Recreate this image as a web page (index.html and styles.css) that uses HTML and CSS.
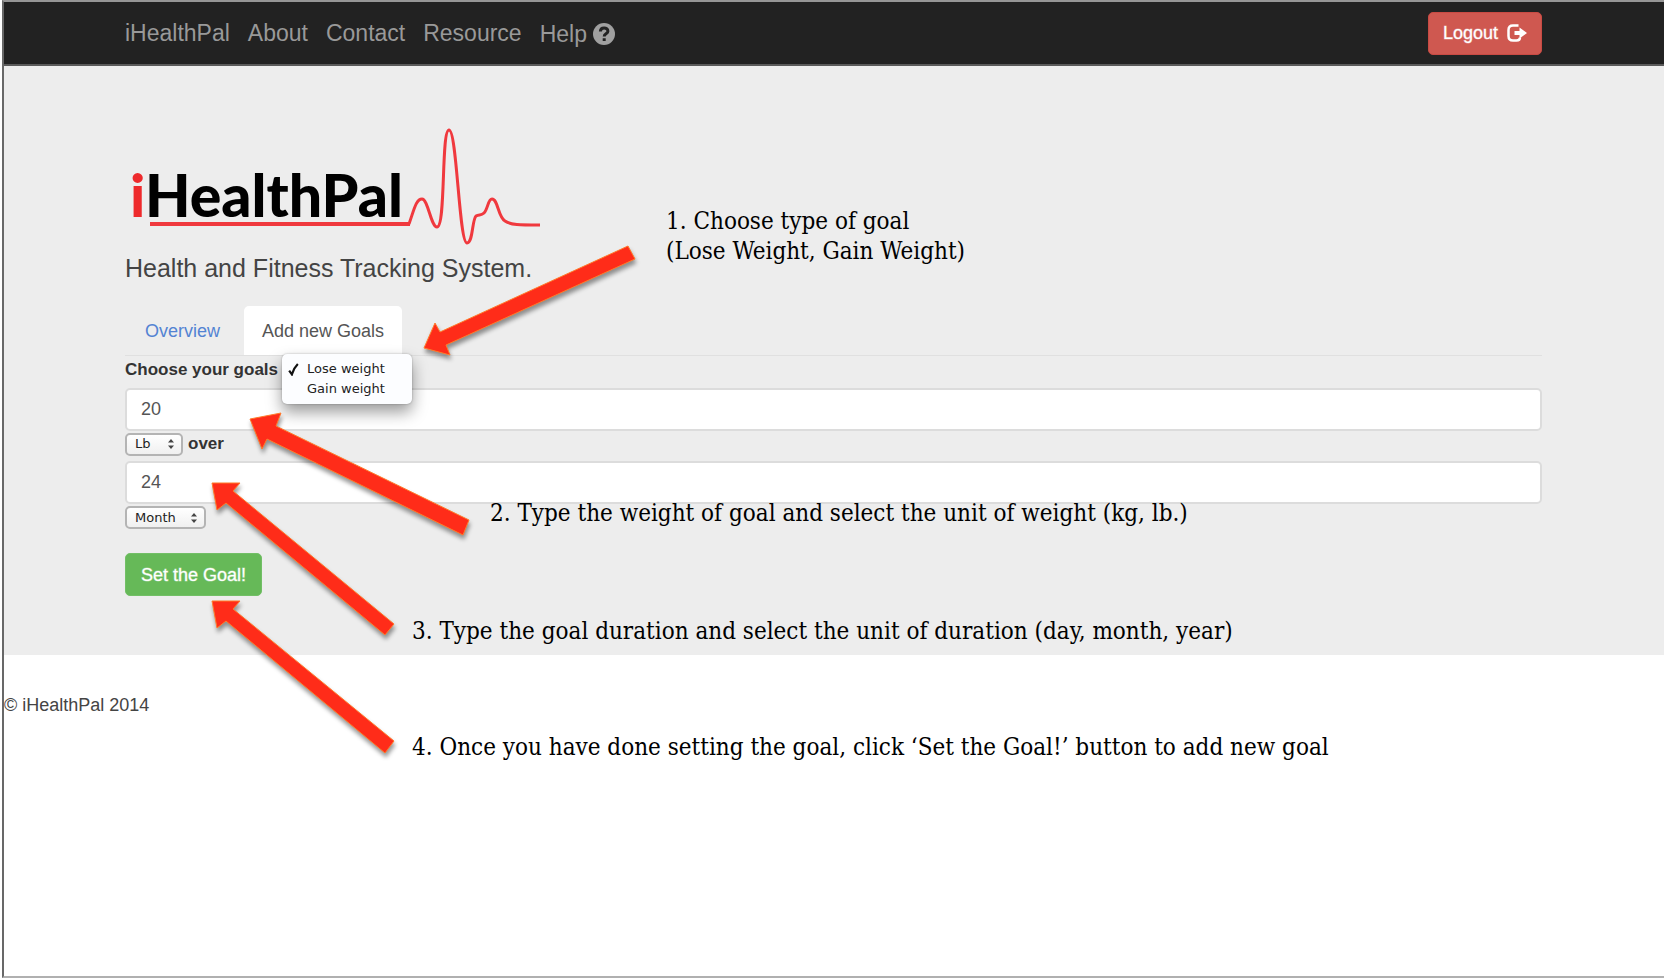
FILE: index.html
```html
<!DOCTYPE html>
<html lang="en">
<head>
<meta charset="utf-8">
<title>iHealthPal - Add new Goals</title>
<link rel="stylesheet" href="styles.css">
</head>
<body>
<div class="page">
  <nav class="navbar">
    <div class="container navbar-row">
      <a class="nav-link" href="#">iHealthPal</a>
      <a class="nav-link" href="#">About</a>
      <a class="nav-link" href="#">Contact</a>
      <a class="nav-link" href="#">Resource</a>
      <a class="nav-link nav-help" href="#">Help
        <svg class="help-icon" viewBox="0 0 22 22" aria-hidden="true"><circle cx="11" cy="11" r="11" fill="#a0a0a0"/><path d="M7.400 8.600C7.400 3.700 14.900 3.900 14.900 8.200C14.900 10.800 11.200 10.800 11.200 13.400M11.200 15.300V18" fill="none" stroke="#222" stroke-width="3"/></svg>
      </a>
      <button class="btn btn-danger" type="button">Logout
        <svg class="logout-icon" viewBox="0 0 20 18" aria-hidden="true"><path d="M11.500 1.500H6Q1.500 1.500 1.500 6V12Q1.500 16.500 6 16.500H9.500Q13 16.500 13 13.500" fill="none" stroke="#fff" stroke-width="2.500"/><path d="M7.500 7H12.500V3.500L20 9L12.500 14.500V11H7.500Z" fill="#fff"/></svg>
      </button>
    </div>
  </nav>

  <main class="hero">
    <div class="container">
      <svg class="logo" viewBox="125 125 420 128" role="img" aria-label="iHealthPal">
        <text class="logo-text" x="130" y="217"><tspan class="logo-i">i</tspan>HealthPal</text>
        <path d="M150 224H410" fill="none" stroke="#f0393e" stroke-width="4"/>
        <path d="M409 224C414 210 416 199 422 199C428 199 431 227 437 227C446 227 441 130 449 130C457 130 459 243 467 243C473 243 472 220 476 216C479 214 481 216 484 213C488 209 488 199 492 199C498 199 498 217 505 221C511 225 519 225 540 225" fill="none" stroke="#f0393e" stroke-width="3"/>
      </svg>
      <p class="tagline">Health and Fitness Tracking System.</p>

      <div class="tabs">
        <a class="tab" href="#">Overview</a>
        <a class="tab tab-active" href="#">Add new Goals</a>
      </div>

      <form class="goal-form">
        <div class="form-row type-row">
          <label class="label" for="goal-type">Choose your goals</label>
          <div class="type-picker">
            <select class="type-select" id="goal-type"><option>Lose weight</option><option>Gain weight</option></select>
            <ul class="menu">
              <li class="menu-item"><svg class="check" viewBox="0 0 12 12" aria-hidden="true"><path d="M2 7L4.500 10.500Q6 5 10 1" fill="none" stroke="#111" stroke-width="2"/></svg>Lose weight</li>
              <li class="menu-item"><span class="check"></span>Gain weight</li>
            </ul>
          </div>
        </div>
        <input class="text-input" type="text" value="20" aria-label="Goal weight">
        <div class="form-row unit-row">
          <span class="picker picker-weight">
            <select class="select" id="weight-unit" aria-label="Weight unit"><option>Lb</option><option>Kg</option></select>
            <svg class="arrows" viewBox="0 0 6 10" aria-hidden="true"><path d="M0 3.500L3 0L6 3.500ZM0 6.500L3 10L6 6.500Z" fill="#444"/></svg>
          </span>
          <label class="label" for="duration">over</label>
        </div>
        <input class="text-input" id="duration" type="text" value="24">
        <div class="form-row duration-row">
          <span class="picker picker-duration">
            <select class="select" aria-label="Duration unit"><option>Month</option><option>Day</option><option>Year</option></select>
            <svg class="arrows" viewBox="0 0 6 10" aria-hidden="true"><path d="M0 3.500L3 0L6 3.500ZM0 6.500L3 10L6 6.500Z" fill="#444"/></svg>
          </span>
        </div>
        <button class="btn btn-success" type="button">Set the Goal!</button>
      </form>
    </div>
  </main>

  <footer class="footer">© iHealthPal 2014</footer>
</div>

<svg class="arrow-layer" width="700" height="800" viewBox="0 0 700 800" aria-hidden="true">
  <g class="arrow-shapes">
    <path d="M424 348L435 323L440 332L628 246L635 259L446 345L450 355Z"/>
    <path d="M250 419L281 413L276 426L469 520L463 535L267 439L262 449Z"/>
    <path d="M212 483H240L233 491L394 624L385 635L226 503L217 510Z"/>
    <path d="M212 601H240L233 609L394 741L385 753L226 621L217 628Z"/>
  </g>
</svg>
<p class="note note-type">1. Choose type of goal<br>(Lose Weight, Gain Weight)</p>
<p class="note note-weight">2. Type the weight of goal and select the unit of weight (kg, lb.)</p>
<p class="note note-duration">3. Type the goal duration and select the unit of duration (day, month, year)</p>
<p class="note note-submit">4. Once you have done setting the goal, click ‘Set the Goal!’ button to add new goal</p>
</body>
</html>
```
FILE: styles.css
```css
* { box-sizing: border-box; }

body {
  margin: 0;
  position: relative;
  background: #fff;
  color: #444;
  font: 18px/22px "Liberation Sans", Arial, sans-serif;
}

.page {
  min-height: 100vh;
  margin: 0 4px 0 2px;
  border-top: 2px solid #969696;
  border-left: 2px solid #686868;
  border-bottom: 2px solid #b0b0b0;
}

.container { margin: 0 122px 0 121px; }

/* Navigation */
.navbar {
  background: #222;
  border-bottom: 2px solid #5a5a5a;
}

.navbar-row {
  display: flex;
  align-items: center;
  gap: 18px;
  height: 62px;
}

.nav-link {
  color: #999;
  font-size: 23px;
  text-decoration: none;
}

.nav-help {
  display: flex;
  align-items: center;
  gap: 6px;
  padding-top: 2px;
}

.help-icon { width: 22px; height: 22px; }

.btn {
  display: flex;
  align-items: center;
  height: 43px;
  padding: 0 14px;
  border: 1px solid;
  border-radius: 5px;
  color: #fff;
  font: 18px/22px "Liberation Sans", Arial, sans-serif;
  -webkit-text-stroke: 1px rgba(255, 255, 255, .4);
}

.btn-danger {
  gap: 9px;
  margin-left: auto;
  background: #cf5850;
  border-color: #c94a43;
}

.logout-icon { width: 20px; height: 18px; }

.btn-success {
  margin-top: 24px;
  padding: 0 15px;
  background: #66b958;
  border-color: #72bf66;
}

/* Goal panel */
.hero {
  padding: 59px 0;
  background: #ededed;
}

.logo {
  display: block;
  width: 420px;
  height: 128px;
}

.logo-text {
  font: 900 59px Lato, sans-serif;
  fill: #000;
}

.logo-text .logo-i { fill: #ee2a2c; }

.tagline {
  margin: 0 0 23px;
  color: #444;
  font-size: 25px;
  line-height: 30px;
}

.tabs {
  display: flex;
  border-bottom: 1px solid #e0e0e0;
}

.tab {
  padding: 14px 19px 13px 20px;
  border-radius: 5px 5px 0 0;
  color: #5383d3;
  text-decoration: none;
}

.tab-active {
  margin-left: 5px;
  padding: 14px 18px 13px;
  background: #fff;
  color: #555;
}

.form-row {
  display: flex;
  align-items: center;
}

.type-row { height: 32px; padding-bottom: 4px; }
.unit-row { gap: 5px; height: 30px; padding-bottom: 4px; }
.duration-row { padding-top: 2px; }

.label {
  color: #333;
  font-size: 17px;
  font-weight: bold;
}

.type-picker {
  position: relative;
  margin-left: 4px;
}

.type-select {
  display: block;
  width: 120px;
  height: 20px;
  opacity: 0;
}

.menu {
  position: absolute;
  top: -6px;
  left: 0;
  z-index: 1;
  width: 130px;
  margin: 0;
  padding: 5px 0;
  border-radius: 5px;
  background: #fcfdff;
  box-shadow: 0 8px 16px rgba(0, 0, 0, .4), 0 0 2px rgba(0, 0, 0, .3);
  color: #222;
  font: 13px/20px "DejaVu Sans", sans-serif;
  list-style: none;
}

.menu-item {
  display: flex;
  align-items: center;
  gap: 7px;
  padding-left: 5px;
  white-space: nowrap;
}

.check { width: 13px; height: 13px; }

.text-input {
  display: block;
  width: 100%;
  height: 43px;
  padding: 0 14px;
  border: 2px solid #dcdcdc;
  border-radius: 5px;
  background: #fff;
  color: #555;
  font: 18px/22px "Liberation Sans", Arial, sans-serif;
}

.picker {
  display: grid;
  align-items: center;
}

.picker-weight { width: 58px; }
.picker-duration { width: 81px; }

.select {
  grid-area: 1 / 1;
  width: 100%;
  height: 23px;
  padding: 0 8px;
  border: 2px solid #b4b4b4;
  border-radius: 5px;
  appearance: none;
  background: linear-gradient(#fff, #f0f0f0);
  color: #222;
  font: 13px/18px "DejaVu Sans", sans-serif;
}

.arrows {
  grid-area: 1 / 1;
  justify-self: end;
  width: 6px;
  height: 10px;
  margin-right: 9px;
  pointer-events: none;
}

.footer { padding-top: 39px; }

/* Tutorial call-outs laid over the page */
.arrow-layer {
  position: absolute;
  top: 0;
  left: 0;
  z-index: 2;
  pointer-events: none;
}

.arrow-shapes {
  fill: #ff2c19;
  stroke: #ff7a2a;
  stroke-width: 1;
  filter: drop-shadow(1px 4px 2px rgba(0, 0, 0, .4));
}

.note {
  position: absolute;
  z-index: 2;
  margin: 0;
  color: #000;
  font: 24px/30px "DejaVu Serif Condensed", "Liberation Serif", serif;
  white-space: nowrap;
}

.note-type { top: 206px; left: 666px; }
.note-weight { top: 498px; left: 490px; }
.note-duration { top: 616px; left: 412px; }
.note-submit { top: 732px; left: 412px; }
```
